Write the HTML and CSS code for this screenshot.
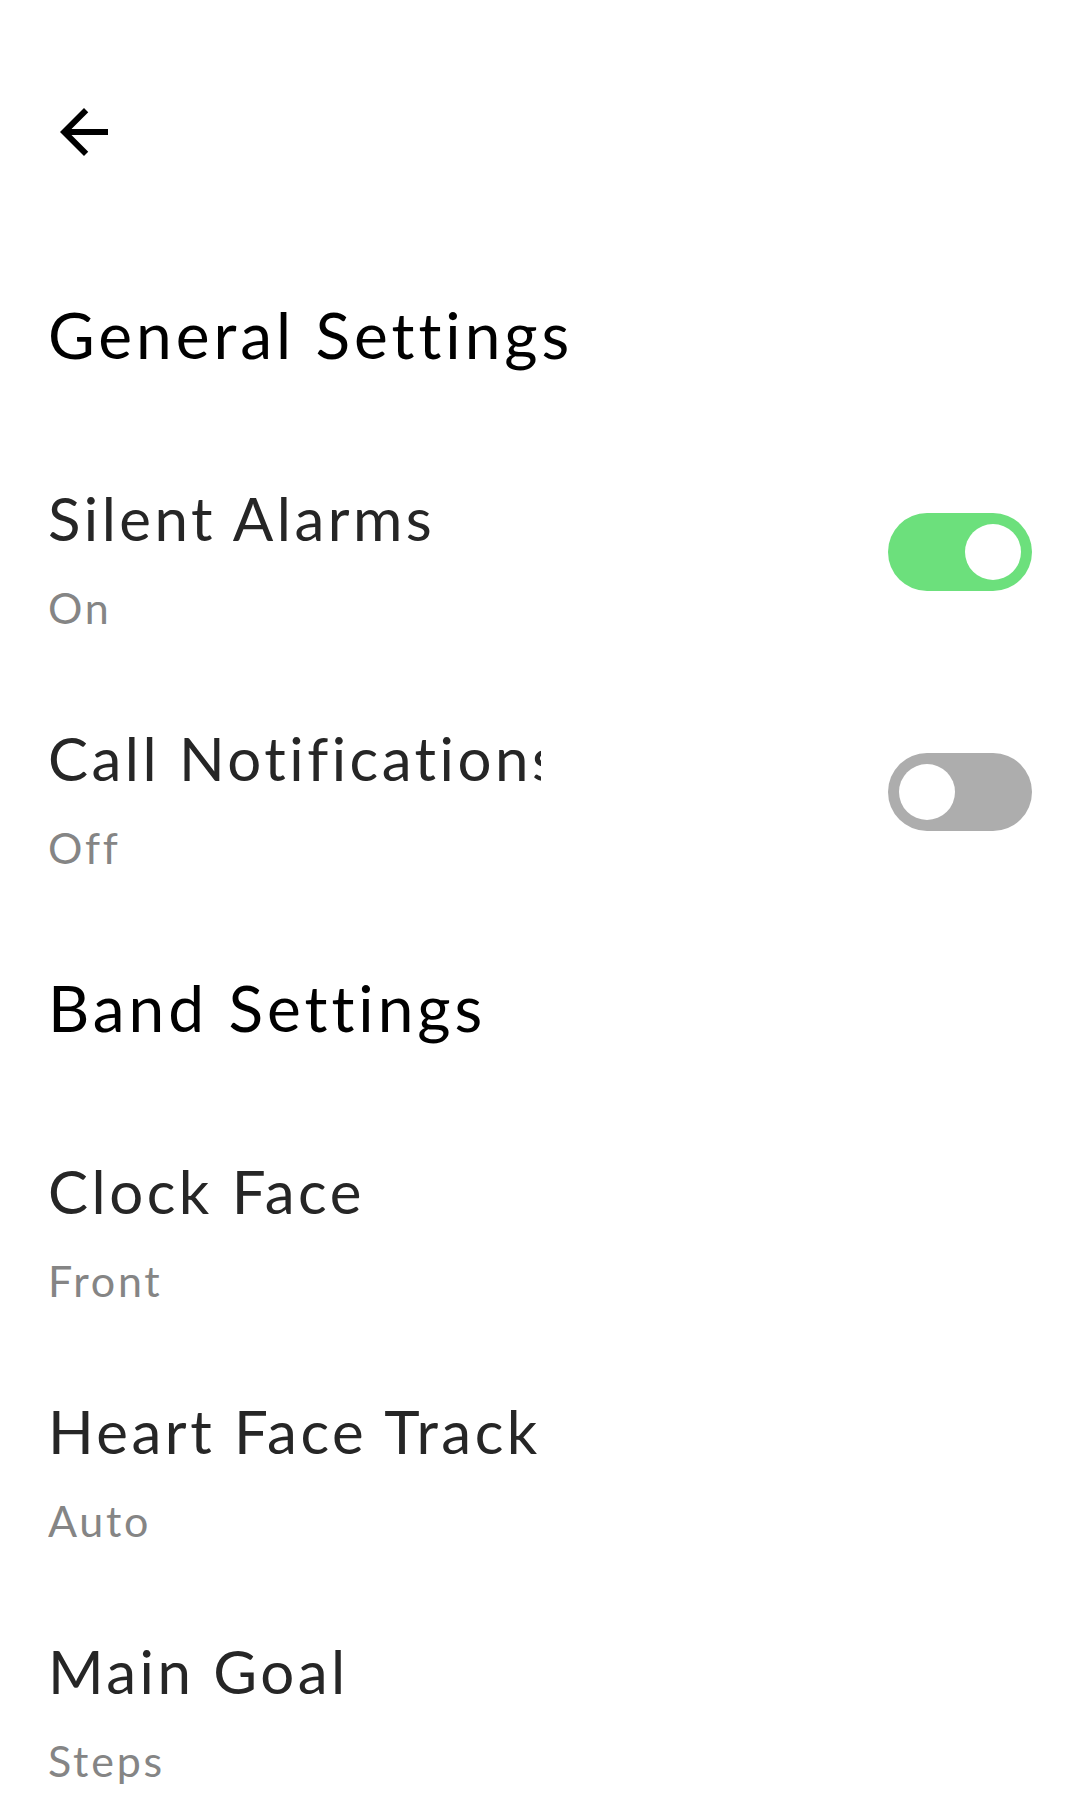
FILE: index.html
```html
<!DOCTYPE html>
<html lang="en">
<head>
<meta charset="utf-8">
<title>Settings</title>
<link rel="stylesheet" href="styles.css">
</head>
<body>
<div class="screen">
  <div class="topbar">
    <button class="back" aria-label="Back">
      <svg viewBox="0 0 24 24" width="72" height="72"><path d="M20 11H7.83l5.59-5.59L12 4l-8 8 8 8 1.41-1.41L7.83 13H20v-2z" fill="#000"/></svg>
    </button>
  </div>

  <h2 class="section first">General Settings</h2>

  <div class="item">
    <div class="texts">
      <div class="title">Silent Alarms</div>
      <div class="sub">On</div>
    </div>
    <div class="toggle on"><span class="knob"></span></div>
  </div>

  <div class="item">
    <div class="texts">
      <div class="title">Call Notifications</div>
      <div class="sub">Off</div>
    </div>
    <div class="toggle off"><span class="knob"></span></div>
  </div>

  <h2 class="section">Band Settings</h2>

  <div class="item">
    <div class="texts">
      <div class="title">Clock Face</div>
      <div class="sub">Front</div>
    </div>
  </div>

  <div class="item">
    <div class="texts">
      <div class="title">Heart Face Track</div>
      <div class="sub">Auto</div>
    </div>
  </div>

  <div class="item">
    <div class="texts">
      <div class="title">Main Goal</div>
      <div class="sub">Steps</div>
    </div>
  </div>
</div>
</body>
</html>
```

FILE: styles.css
```css
html, body {
  margin: 0;
  padding: 0;
  background: #ffffff;
}

body {
  font-family: "Lato", "Open Sans", sans-serif;
  font-variant-ligatures: none;
  font-feature-settings: "liga" 0, "clig" 0;
  width: 1080px;
  height: 1806px;
  overflow: hidden;
}

.screen {
  padding: 0 48px;
}

.topbar {
  padding-top: 96px;
  height: 72px;
  display: flex;
}

.back {
  width: 72px;
  height: 72px;
  padding: 0;
  margin: 0;
  border: none;
  background: none;
  display: block;
}

.back svg {
  display: block;
}

.section {
  margin: 49px 0 64px;
  font-size: 64px;
  line-height: 80px;
  font-weight: 400;
  letter-spacing: 0.062em;
  color: #000;
}

.section.first {
  margin-top: 127px;
}

.item {
  height: 240px;
  box-sizing: border-box;
  padding: 43px 0;
  display: flex;
  align-items: flex-start;
  justify-content: space-between;
}

.texts {
  max-width: 493px;
  overflow: hidden;
}

.title {
  font-size: 60px;
  line-height: 72px;
  letter-spacing: 0.058em;
  color: #262626;
  white-space: nowrap;
}

.sub {
  margin-top: 26px;
  font-size: 43px;
  line-height: 56px;
  letter-spacing: 0.064em;
  color: #858585;
  white-space: nowrap;
}

.toggle {
  margin-top: 31px;
  width: 144px;
  height: 78px;
  border-radius: 39px;
  box-sizing: border-box;
  padding: 0 11px;
  display: flex;
  align-items: center;
}

.toggle.on {
  background: #6ce07c;
  justify-content: flex-end;
}

.toggle.off {
  background: #adadad;
  justify-content: flex-start;
}

.knob {
  width: 56px;
  height: 56px;
  border-radius: 50%;
  background: #fff;
  display: block;
}
```
